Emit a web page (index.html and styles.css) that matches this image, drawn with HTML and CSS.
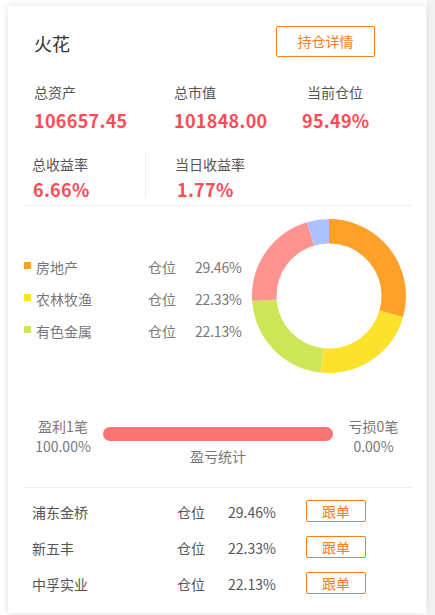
FILE: index.html
```html
<!DOCTYPE html>
<html lang="zh-CN">
<head>
<meta charset="utf-8">
<title>火花</title>
<link rel="stylesheet" href="styles.css">
</head>
<body>
<div class="card">
  <div class="header">
    <div class="title">火花</div>
    <div class="detail-btn">持仓详情</div>
  </div>

  <div class="stats1">
    <div class="s-col c1"><div class="label">总资产</div><div class="value">106657.45</div></div>
    <div class="s-col c2"><div class="label">总市值</div><div class="value">101848.00</div></div>
    <div class="s-col c3"><div class="label">当前仓位</div><div class="value">95.49%</div></div>
  </div>

  <div class="stats2">
    <div class="s2-col d1"><div class="label">总收益率</div><div class="value">6.66%</div></div>
    <div class="s2-col d2"><div class="label">当日收益率</div><div class="value">1.77%</div></div>
  </div>

  <div class="hr hr1"></div>

  <div class="chart">
    <div class="legend">
      <div class="lg-row"><span class="sq sq-orange"></span><span class="lg-name">房地产</span><span class="lg-pos">仓位</span><span class="lg-pct">29.46%</span></div>
      <div class="lg-row"><span class="sq sq-yellow"></span><span class="lg-name">农林牧渔</span><span class="lg-pos">仓位</span><span class="lg-pct">22.33%</span></div>
      <div class="lg-row"><span class="sq sq-green"></span><span class="lg-name">有色金属</span><span class="lg-pos">仓位</span><span class="lg-pct">22.13%</span></div>
    </div>
    <svg class="donut" width="154" height="154" viewBox="0 0 154 154">
      <g transform="rotate(-90 77 77)" fill="none" stroke-width="24.5">
        <circle cx="77" cy="77" r="64.75" pathLength="100" stroke="#ffa02b" stroke-dasharray="29.46 100" stroke-dashoffset="0"/>
        <circle cx="77" cy="77" r="64.75" pathLength="100" stroke="#fde22d" stroke-dasharray="22.33 100" stroke-dashoffset="-29.46"/>
        <circle cx="77" cy="77" r="64.75" pathLength="100" stroke="#cde656" stroke-dasharray="22.13 100" stroke-dashoffset="-51.79"/>
        <circle cx="77" cy="77" r="64.75" pathLength="100" stroke="#ff9391" stroke-dasharray="21.48 100" stroke-dashoffset="-73.92"/>
        <circle cx="77" cy="77" r="64.75" pathLength="100" stroke="#adc0ff" stroke-dasharray="4.6 100" stroke-dashoffset="-95.4"/>
      </g>
    </svg>
  </div>

  <div class="pl">
    <div class="pl-side pl-left"><div class="pl-t">盈利1笔</div><div class="pl-t">100.00%</div></div>
    <div class="pl-mid">
      <div class="bar"></div>
      <div class="pl-cap">盈亏统计</div>
    </div>
    <div class="pl-side pl-right"><div class="pl-t">亏损0笔</div><div class="pl-t">0.00%</div></div>
  </div>

  <div class="hr hr2"></div>

  <div class="stocks">
    <div class="st-row"><span class="st-name">浦东金桥</span><span class="st-pos">仓位</span><span class="st-pct">29.46%</span><span class="follow">跟单</span></div>
    <div class="st-row"><span class="st-name">新五丰</span><span class="st-pos">仓位</span><span class="st-pct">22.33%</span><span class="follow">跟单</span></div>
    <div class="st-row"><span class="st-name">中孚实业</span><span class="st-pos">仓位</span><span class="st-pct">22.13%</span><span class="follow">跟单</span></div>
  </div>
</div>
</body>
</html>
```

FILE: styles.css
```css
html, body {
  margin: 0;
  padding: 0;
}
body {
  width: 435px;
  height: 615px;
  overflow: hidden;
  background: linear-gradient(to right, #ffffff 427px, #f3f3f3 427px);
  font-family: "Noto Sans CJK SC", "Noto Sans", sans-serif;
  padding-top: 6px;
  padding-left: 8px;
  box-sizing: border-box;
}
.card {
  width: 418px;
  height: 607px;
  background: #fff;
  box-shadow: 0 0 7px rgba(0, 0, 0, 0.13);
  box-sizing: border-box;
  padding-top: 20px;
}
.header {
  display: flex;
  align-items: flex-start;
  padding-left: 26px;
  height: 31px;
}
.title {
  font-size: 18px;
  line-height: 31px;
  margin-top: 2px;
  color: #333;
  width: 242px;
}
.detail-btn {
  width: 99px;
  height: 31px;
  box-sizing: border-box;
  border: 1px solid #ff7a1a;
  border-radius: 2px;
  color: #ff7a1a;
  font-size: 14px;
  line-height: 29px;
  text-align: center;
}
.label {
  font-size: 14px;
  line-height: 20px;
  color: #555;
}
.value {
  font-size: 18px;
  font-weight: bold;
  line-height: 26px;
  color: #ff4b55;
  letter-spacing: 0.3px;
}
.stats1 {
  display: flex;
  margin-top: 25px;
  padding-left: 26px;
}
.stats1 .label { margin-bottom: 5px; }
.c1 { width: 140px; }
.c2 { width: 128px; }
.c3 { width: 66px; text-align: center; }
.stats2 {
  display: flex;
  margin-top: 20px;
  padding-left: 24px;
  height: 45px;
}
.s2-col { height: 45px; }
.s2-col .label { margin-top: 1px; margin-bottom: 3px; }
.s2-col .value { line-height: 24px; }
.d1 {
  width: 113px;
  border-right: 1px solid #eeeeee;
}
.d1 .value { padding-left: 1px; }
.d2 { padding-left: 29px; }
.d2 .value { padding-left: 2px; }
.hr {
  height: 1px;
  background: #efefef;
  margin-left: 16px;
  margin-right: 14px;
}
.hr1 { margin-top: 7px; }
.chart {
  display: flex;
  padding-top: 13px;
  padding-left: 16px;
  height: 154px;
}
.legend {
  width: 228px;
  margin-top: 32px;
}
.lg-row {
  display: flex;
  align-items: center;
  height: 32px;
  font-size: 14px;
  color: #777;
}
.sq {
  width: 7px;
  height: 7px;
  margin-right: 5px;
  margin-top: -3px;
}
.sq-orange { background: #ffa02b; }
.sq-yellow { background: #fde22d; }
.sq-green { background: #cde656; }
.lg-name { width: 112px; }
.lg-pos { width: 47px; }
.lg-pct { letter-spacing: -0.2px; }
.donut { display: block; }
.pl {
  display: flex;
  margin-top: 43px;
  padding-left: 16px;
}
.pl-side {
  text-align: center;
  font-size: 14px;
  color: #777;
}
.pl-t { line-height: 20px; }
.pl-left { width: 78px; margin-right: 1px; }
.pl-right { width: 77px; margin-left: 2px; }
.pl-mid {
  width: 230px;
  padding-top: 11px;
  text-align: center;
}
.bar {
  height: 14px;
  border-radius: 7px;
  background: #fa7474;
}
.pl-cap {
  margin-top: 5px;
  line-height: 20px;
  font-size: 14px;
  color: #777;
}
.hr2 { margin-top: 21px; }
.stocks {
  padding-top: 6px;
  padding-left: 24px;
}
.st-row {
  display: flex;
  align-items: center;
  height: 36px;
  font-size: 14px;
  color: #555;
}
.st-name { width: 145px; }
.st-pos { width: 51px; }
.st-pct { width: 78px; }
.follow {
  width: 60px;
  height: 22px;
  box-sizing: border-box;
  border: 1px solid #ff7a1a;
  border-radius: 2px;
  color: #ff7a1a;
  text-align: center;
  line-height: 20px;
  margin-top: -2px;
}
```
